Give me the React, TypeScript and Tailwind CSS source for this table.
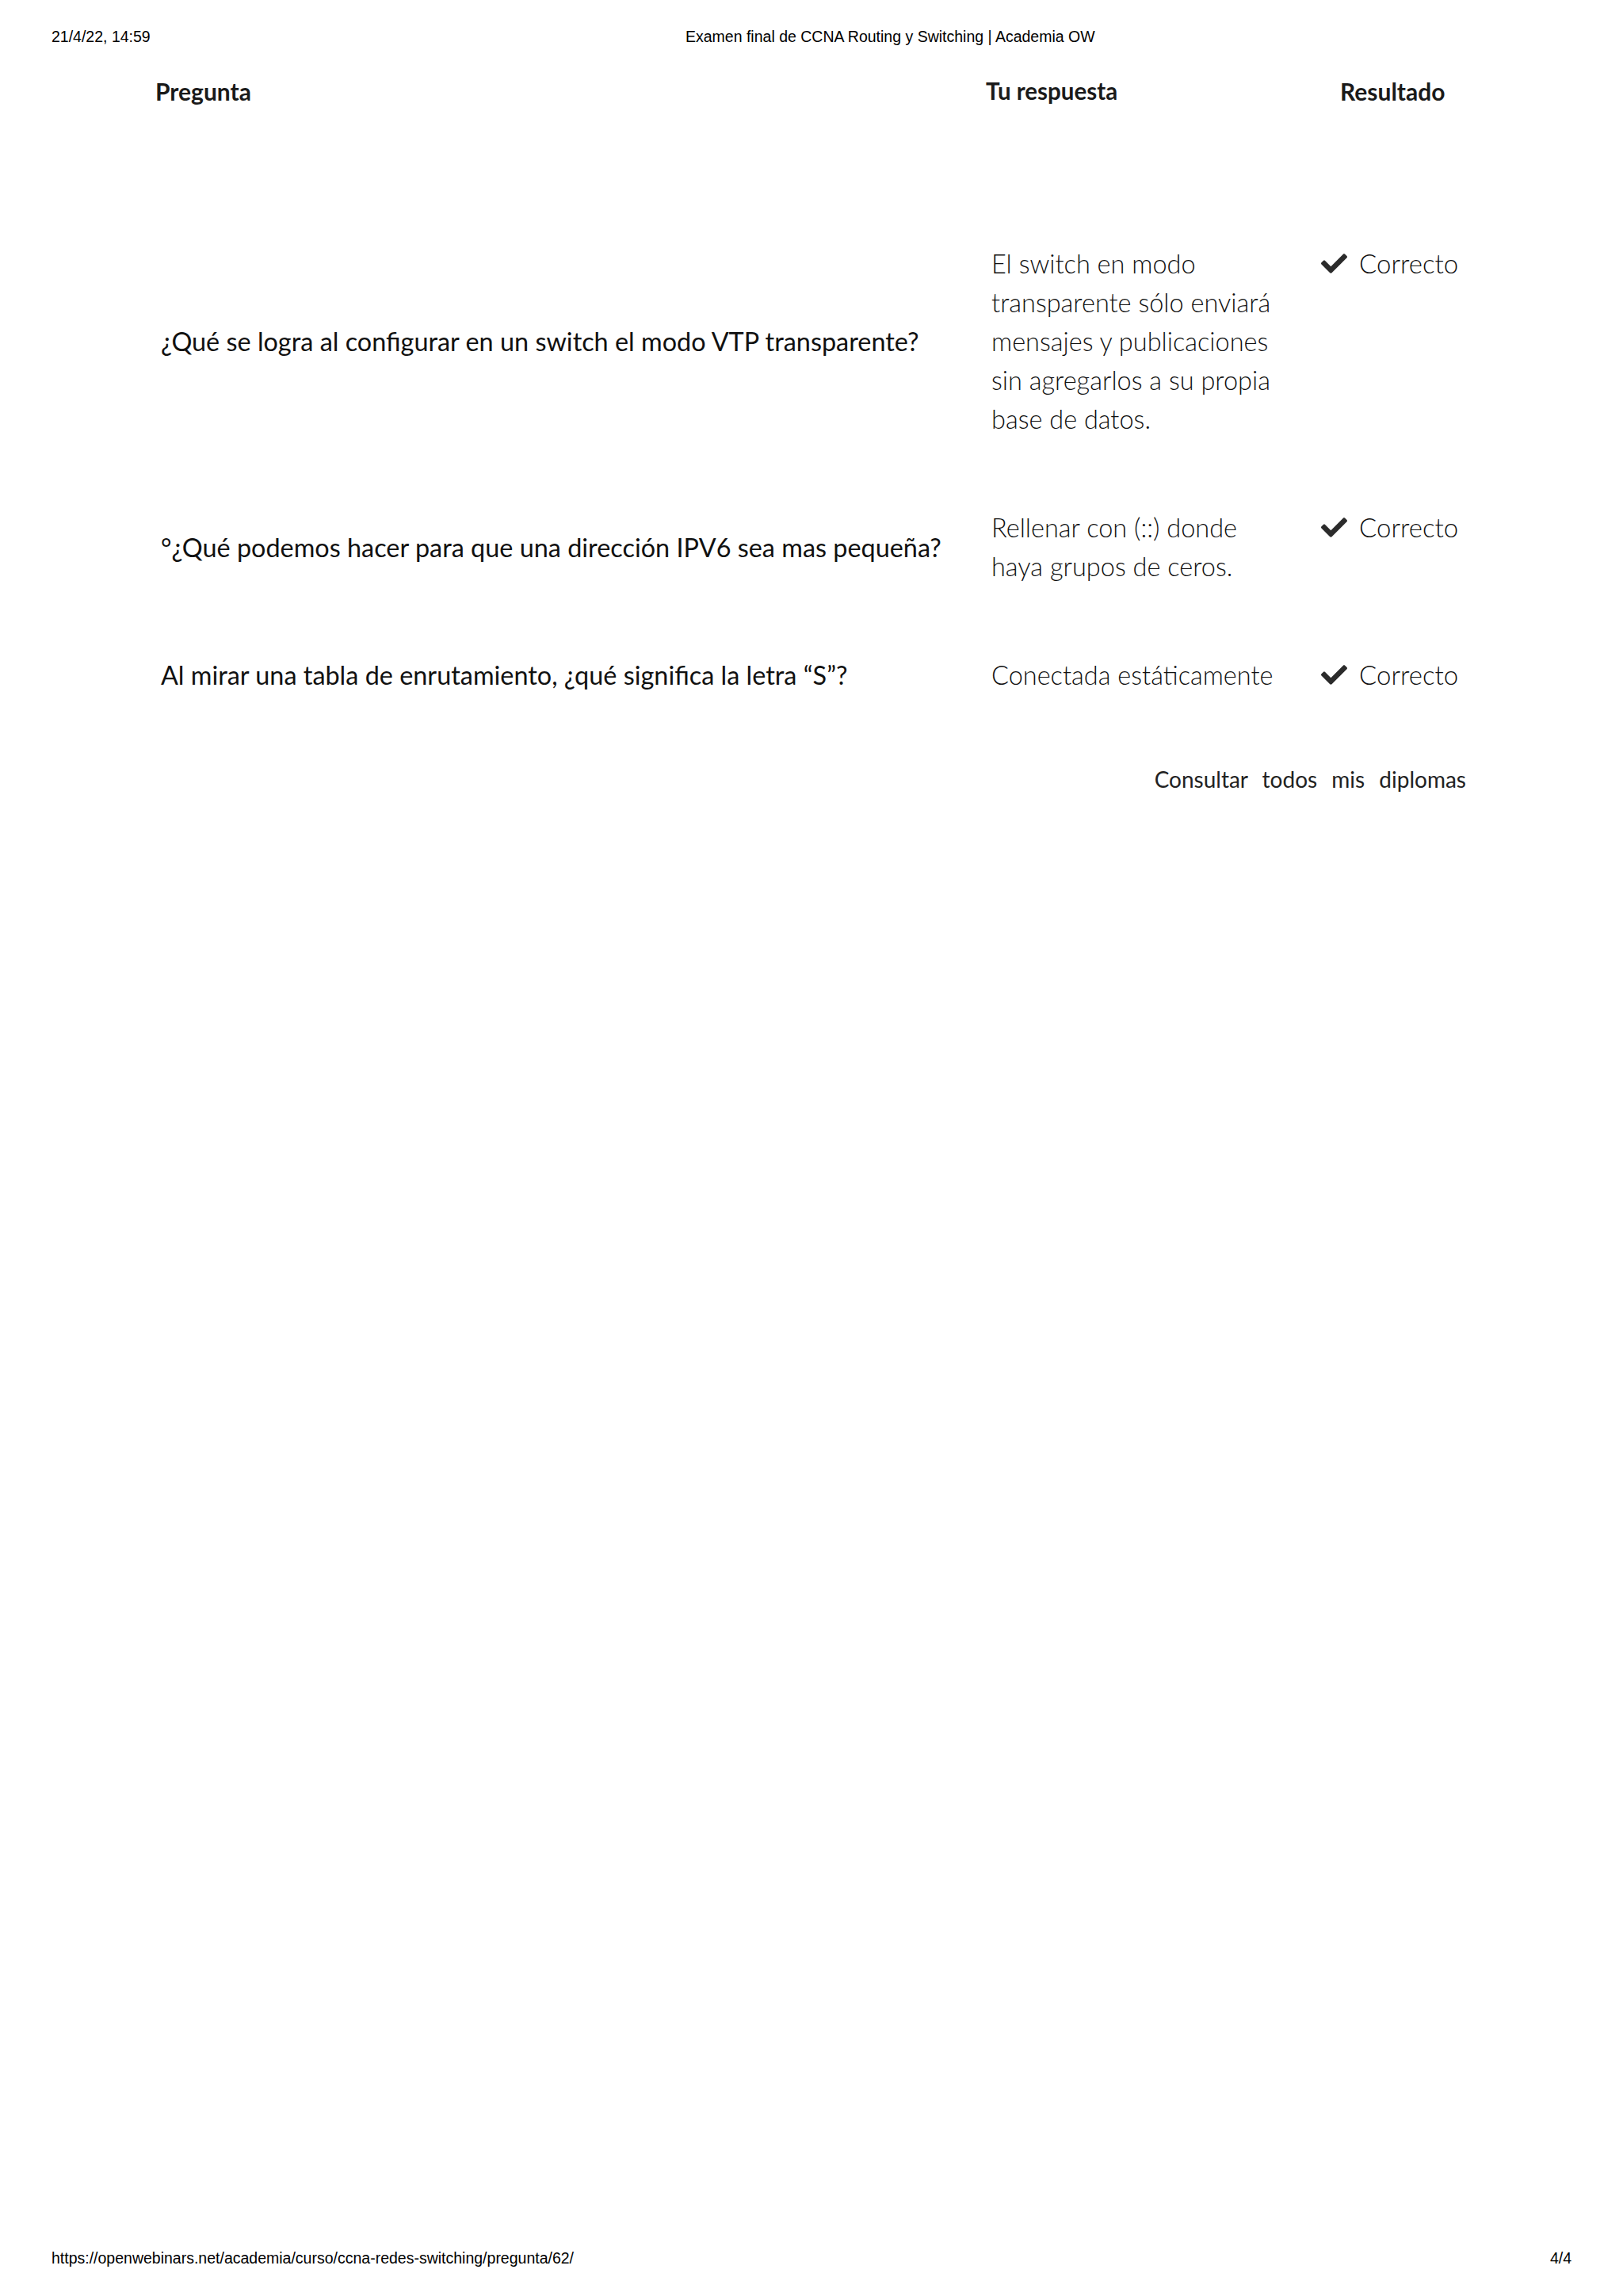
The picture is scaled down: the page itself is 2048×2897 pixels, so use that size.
import { FaCheck } from "react-icons/fa";

type Row = {
  question: string;
  answer: string[];
};

const ROWS: Row[] = [
  {
    question: "¿Qué se logra al configurar en un switch el modo VTP transparente?",
    answer: [
      "El switch en modo",
      "transparente sólo enviará",
      "mensajes y publicaciones",
      "sin agregarlos a su propia",
      "base de datos.",
    ],
  },
  {
    question: "°¿Qué podemos hacer para que una dirección IPV6 sea mas pequeña?",
    answer: ["Rellenar con (::) donde", "haya grupos de ceros."],
  },
  {
    question: "Al mirar una tabla de enrutamiento, ¿qué significa la letra “S”?",
    answer: ["Conectada estáticamente"],
  },
];

const App = () => {
  return (
    <div className="min-h-[2897px] w-[2048px] bg-white flex flex-col text-[#111]">
      {/* print header */}
      <div className="flex items-center pt-[34px] px-[65px] font-['Liberation_Sans',Arial,sans-serif] text-[19.5px] leading-[24px] text-black">
        <div className="w-[800px]">21/4/22, 14:59</div>
        <div>Examen final de CCNA Routing y Switching | Academia OW</div>
      </div>

      <main className="font-['Lato',sans-serif] pl-[196px] pr-[150px]">
        {/* table head */}
        <div className="grid grid-cols-[1048px_423px_1fr] mt-[40px] leading-[34px] font-bold text-[#1a1a1a]">
          <div className="text-[30px]">Pregunta</div>
          <div className="text-[29.5px]">Tu respuesta</div>
          <div className="pl-[24px] text-[30px]">Resultado</div>
        </div>

        <div className="mt-[132px] flex flex-col">
          {ROWS.map((row, i) => (
            <div
              key={i}
              className="grid grid-cols-[1055px_416px_1fr] py-[44px]"
            >
              <div className="self-center pl-[7px] text-[32.4px] leading-[49px] text-[#111]">
                {row.question}
              </div>
              <div className="text-[32.5px] leading-[49px] font-light text-[#111]">
                {row.answer.map((line) => (
                  <span key={line} className="block whitespace-nowrap">
                    {line}
                  </span>
                ))}
              </div>
              <div className="flex items-center self-start h-[49px] gap-[15px] text-[33px] leading-[49px] font-light text-[#111]">
                <FaCheck className="w-[33px] h-[33px] text-[#2b2b2b]" />
                <span>Correcto</span>
              </div>
            </div>
          ))}
        </div>

        <div className="flex justify-end mt-[46px] pr-[48px]">
          <span className="text-[28px] leading-[34px] text-[#222] [word-spacing:11px]">
            Consultar todos mis diplomas
          </span>
        </div>
      </main>

      {/* print footer */}
      <div className="mt-auto flex items-center justify-between px-[65px] pb-[36px] font-['Liberation_Sans',Arial,sans-serif] text-[19.5px] leading-[24px] text-black">
        <div>https://openwebinars.net/academia/curso/ccna-redes-switching/pregunta/62/</div>
        <div>4/4</div>
      </div>
    </div>
  );
};

export default App;
